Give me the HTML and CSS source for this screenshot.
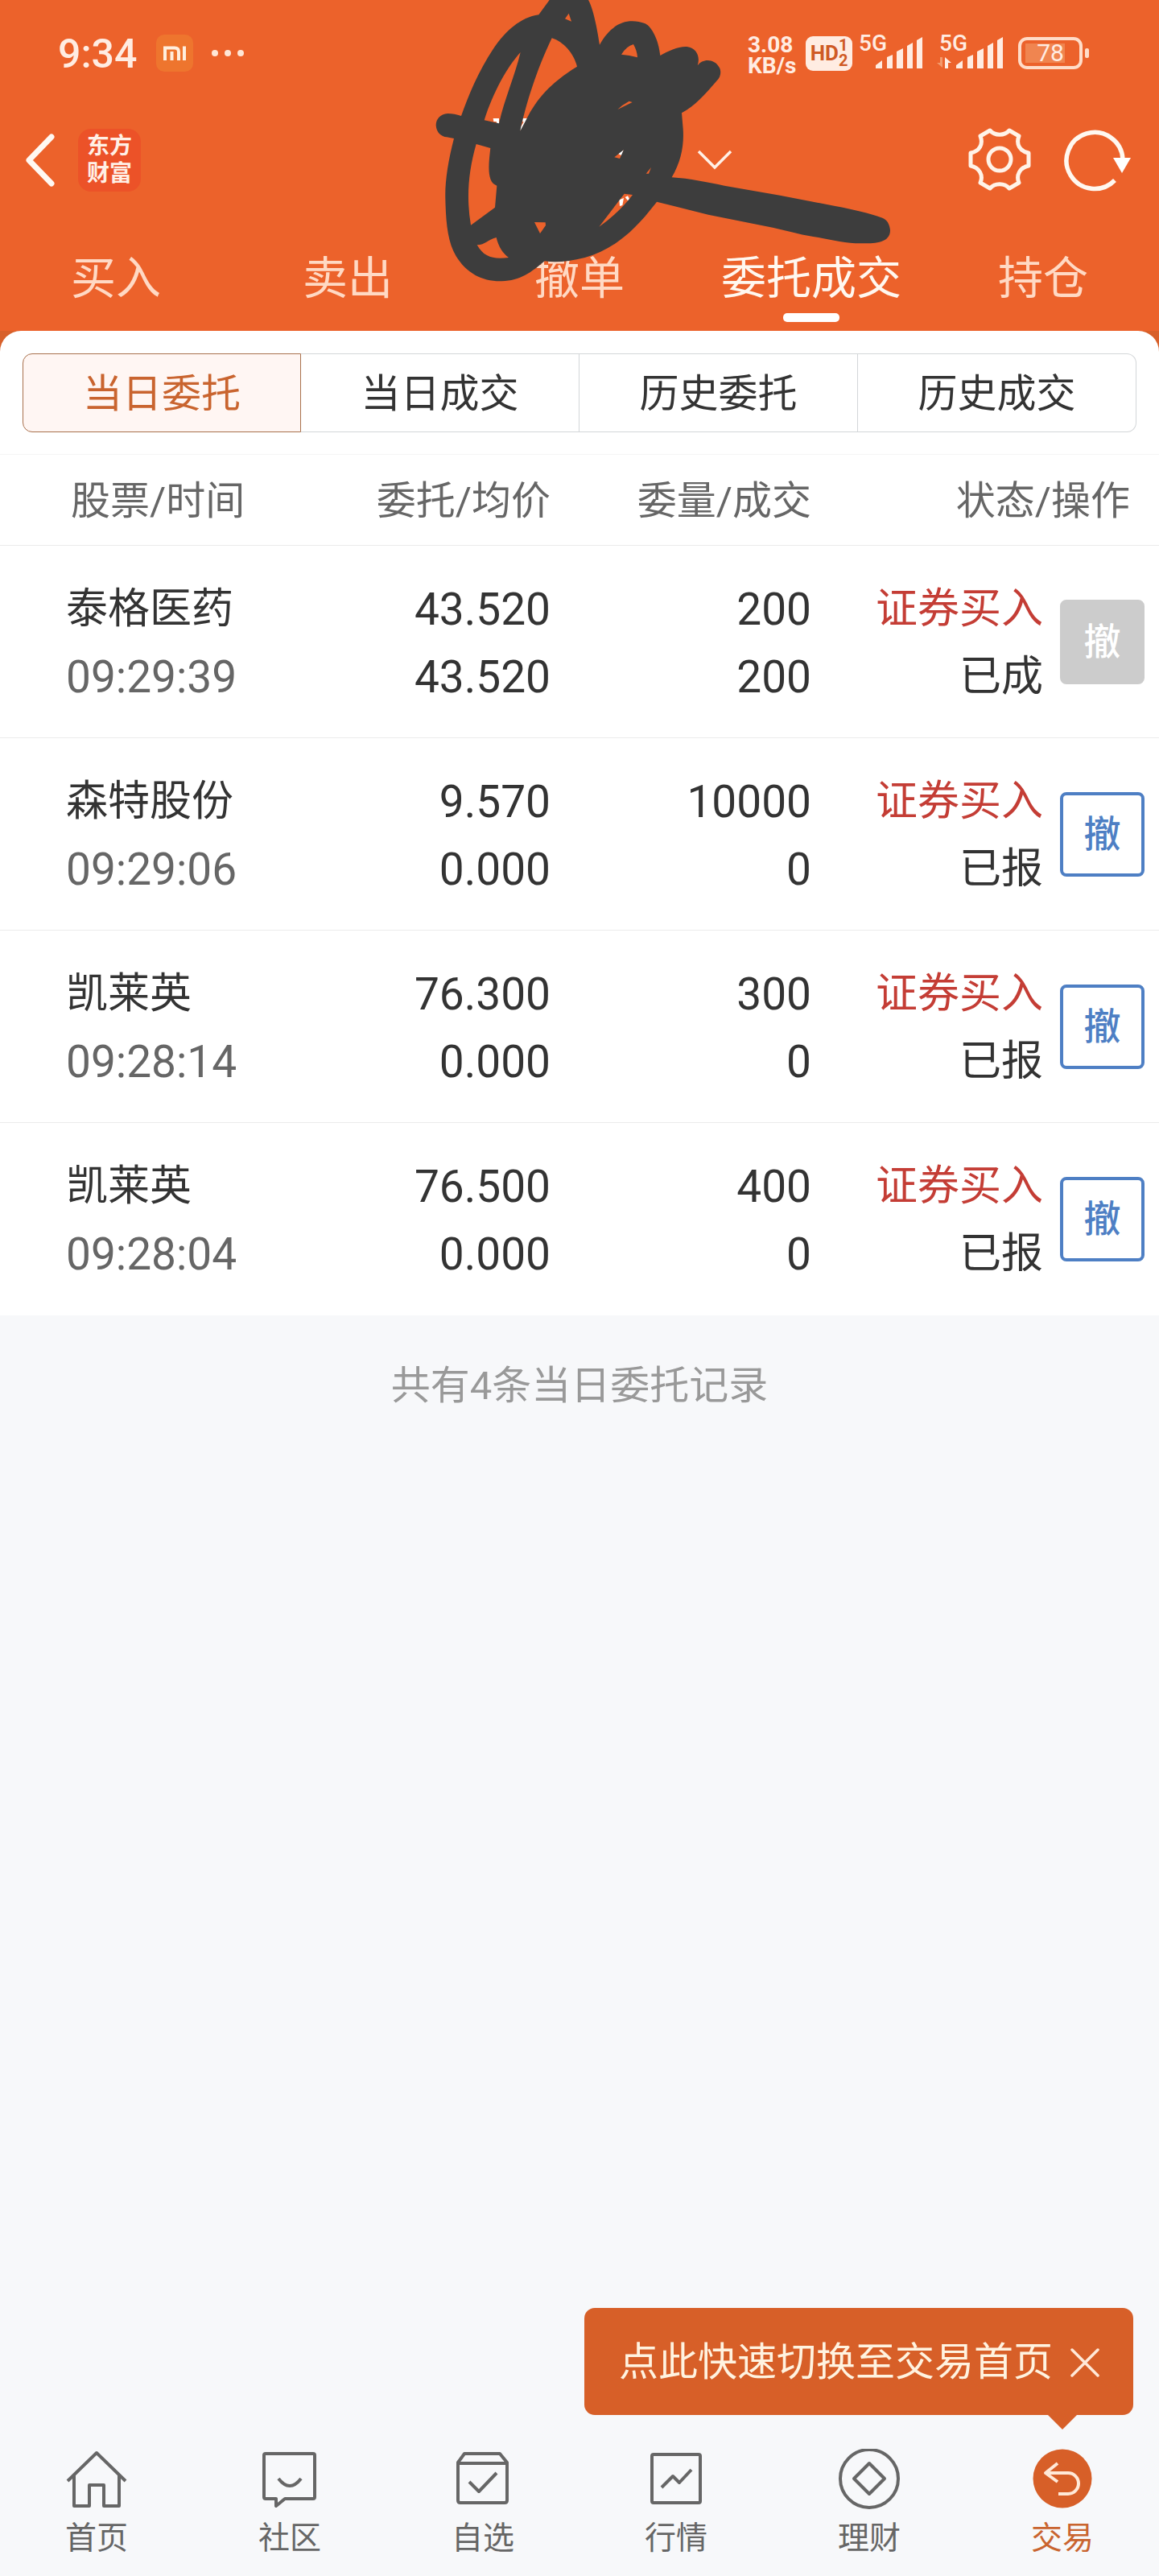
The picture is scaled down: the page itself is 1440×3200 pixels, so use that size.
FILE: index.html
```html
<!DOCTYPE html>
<html lang="zh-CN">
<head>
<meta charset="utf-8">
<meta name="viewport" content="width=device-width, initial-scale=1">
<title>委托成交</title>
<link rel="stylesheet" href="styles.css">
</head>
<body>
<div class="page">
  <header class="header">
    <div class="status-bar">
      <span class="clock">9:34</span>
      <svg class="mi-badge" width="46" height="46" viewBox="0 0 46 46" aria-hidden="true">
        <rect width="46" height="46" rx="10" fill="#ee752e"/>
        <path d="M11 32V16.500H23Q28 16.500 28 21.500V32M19.500 21V32" fill="none" stroke="#ffeedd" stroke-width="4"/>
        <path d="M35 14.500V32" stroke="#ffeedd" stroke-width="4"/>
      </svg>
      <svg class="more-dots" width="42" height="10" viewBox="0 0 42 10" fill="#ffe6d6" aria-hidden="true">
        <circle cx="5" cy="5" r="4"/><circle cx="21" cy="5" r="4"/><circle cx="37" cy="5" r="4"/>
      </svg>
      <div class="status-icons">
        <div class="net-speed"><span>3.08</span><span>KB/s</span></div>
        <div class="hd-badge"><span class="hd">HD</span><span class="sims"><span>1</span><span>2</span></span></div>
        <div class="signal">
          <span>5G</span>
          <svg width="60" height="40" viewBox="0 0 60 40" fill="#ffece2" aria-hidden="true">
            <path d="M1 39V35L9 29V39ZM15 39V25L22 22V39ZM27 39V18L35 14V39ZM40 39V11L47 7V39ZM52 39V4L59 0V39Z"/>
          </svg>
        </div>
        <div class="signal">
          <span>5G</span>
          <svg class="transfer" width="20" height="16" viewBox="0 0 20 16" aria-hidden="true">
            <path d="M8 1V14L1 8H5V1Z" fill="#f39a6c"/><path d="M11 15V1L19 8H15V15Z" fill="#ffece2"/>
          </svg>
          <svg width="60" height="40" viewBox="0 0 60 40" fill="#ffece2" aria-hidden="true">
            <path d="M1 39V35L9 29V39ZM15 39V25L22 22V39ZM27 39V18L35 14V39ZM40 39V11L47 7V39ZM52 39V4L59 0V39Z"/>
          </svg>
        </div>
        <div class="battery"><span>78</span></div>
      </div>
    </div>

    <div class="nav-bar">
      <button class="icon-button back" type="button" aria-label="返回">
        <svg width="40" height="68" viewBox="0 0 40 68" fill="none" stroke="#fff8f2" stroke-width="7" stroke-linecap="round" stroke-linejoin="round">
          <path d="M33 5L5 34L33 63"/>
        </svg>
      </button>
      <span class="logo">东方<br>财富</span>
      <button class="icon-button account" type="button" aria-label="切换账户">
        <svg width="44" height="26" viewBox="0 0 44 26" fill="none" stroke="#fff0e6" stroke-width="3.500">
          <path d="M2 2L22 22L42 2"/>
        </svg>
      </button>
      <button class="icon-button settings" type="button" aria-label="设置">
        <svg width="80" height="80" viewBox="0 0 80 80" fill="none" stroke="#fff3e8" stroke-width="5" stroke-linejoin="round">
          <circle cx="40" cy="39" r="14"/>
          <path d="M28 3C34 10 46 10 52 3L64 10C60 20 65 29 76 31V47C65 49 60 59 64 68L52 75C46 68 34 68 28 75L16 68C20 59 15 49 4 47V31C15 29 20 20 16 10Z"/>
        </svg>
      </button>
      <button class="icon-button refresh" type="button" aria-label="刷新">
        <svg width="84" height="80" viewBox="0 0 84 80">
          <path d="M73 39A35 35 0 1 0 63 65" fill="none" stroke="#fff8f0" stroke-width="5.500"/>
          <path d="M61 37H83L72 56Z" fill="#fff"/>
        </svg>
      </button>
    </div>

    <nav class="tabs">
      <a href="#">买入</a>
      <a href="#">卖出</a>
      <a href="#">撤单</a>
      <a href="#" class="active" aria-current="page">委托成交</a>
      <a href="#">持仓</a>
    </nav>

    <svg class="scribble" width="640" height="367" viewBox="0 0 1920 1101" aria-hidden="true">
      <path fill="#fff" d="M398 441H420V462L412 460L410 453H400ZM508 441H526L500 488L497 480L512 454H508ZM863 572L885 558L877 580ZM868 745L885 738L880 765L870 768ZM890 735L900 730L906 742L900 748Z"/>
      <path fill="#3d3d3d" fill-rule="evenodd" d="M608 0L568 55C500 65 445 115 400 180C340 270 305 360 279 432C262 427 245 423 229 423C200 425 185 445 185 467C187 495 205 508 225 511L252 516C230 600 218 680 220 740C222 830 228 900 260 955C300 1020 360 1050 430 1048C500 1046 540 1015 590 973C630 980 680 975 740 960C850 930 930 855 1008 752L1200 800L1440 848C1500 862 1560 878 1611 885C1660 895 1720 907 1766 907C1810 907 1878 910 1878 858C1876 835 1866 818 1849 812C1800 795 1740 780 1673 768L1467 728L1260 692C1200 680 1130 665 1064 661C1100 600 1110 540 1106 480L1101 421C1150 395 1190 350 1230 303C1250 285 1248 260 1240 250C1225 220 1180 215 1160 244C1170 215 1160 180 1120 174C1090 172 1050 190 1021 207C1015 150 990 100 965 88C900 65 840 85 795 167C785 100 770 30 753 0Z
        M680 50L690 80L666 70Z
        M617 142C660 155 700 200 711 248C610 310 560 370 524 441L499 488C520 390 560 260 617 142Z
        M500 195C480 280 440 370 420 460L365 448C400 340 450 250 500 195Z
        M335 537L388 552C380 620 375 680 412 692L405 773L315 839C298 740 305 640 335 537Z
        M338 913C370 912 375 895 410 885C418 920 435 945 456 960C400 967 365 960 338 913Z
        M552 828L593 829L594 840L573 870Z
        M876 203Q895 172 921 165Q935 190 936 214Q905 205 876 203Z
        M862 408Q880 390 905 377L917 381Z
        M850 586L885 558L870 591Z
        M968 647L987 624L978 647Z
        M887 722L918 726Q870 790 793 845Z"/>
    </svg>
  </header>

  <main class="main">
    <div class="sheet-wrap">
      <section class="sheet">
        <div class="segments">
          <button type="button" class="segment selected">当日委托</button>
          <button type="button" class="segment">当日成交</button>
          <button type="button" class="segment">历史委托</button>
          <button type="button" class="segment">历史成交</button>
        </div>
        <table class="orders">
          <colgroup><col class="c-name"><col class="c-price"><col class="c-qty"><col class="c-status"><col class="c-action"></colgroup>
          <thead>
            <tr><th>股票/时间</th><th>委托/均价</th><th>委量/成交</th><th colspan="2">状态/操作</th></tr>
          </thead>
          <tbody>
            <tr>
              <td><span>泰格医药</span><span class="num time">09:29:39</span></td>
              <td><span class="num">43.520</span><span class="num">43.520</span></td>
              <td><span class="num">200</span><span class="num">200</span></td>
              <td><span class="buy">证券买入</span><span>已成</span></td>
              <td class="action"><button type="button" class="cancel" disabled>撤</button></td>
            </tr>
            <tr>
              <td><span>森特股份</span><span class="num time">09:29:06</span></td>
              <td><span class="num">9.570</span><span class="num">0.000</span></td>
              <td><span class="num">10000</span><span class="num">0</span></td>
              <td><span class="buy">证券买入</span><span>已报</span></td>
              <td class="action"><button type="button" class="cancel">撤</button></td>
            </tr>
            <tr>
              <td><span>凯莱英</span><span class="num time">09:28:14</span></td>
              <td><span class="num">76.300</span><span class="num">0.000</span></td>
              <td><span class="num">300</span><span class="num">0</span></td>
              <td><span class="buy">证券买入</span><span>已报</span></td>
              <td class="action"><button type="button" class="cancel">撤</button></td>
            </tr>
            <tr>
              <td><span>凯莱英</span><span class="num time">09:28:04</span></td>
              <td><span class="num">76.500</span><span class="num">0.000</span></td>
              <td><span class="num">400</span><span class="num">0</span></td>
              <td><span class="buy">证券买入</span><span>已报</span></td>
              <td class="action"><button type="button" class="cancel">撤</button></td>
            </tr>
          </tbody>
        </table>
      </section>
    </div>
    <p class="summary">共有4条当日委托记录</p>
  </main>

  <footer class="bottom-bar">
    <div class="tip" role="status">
      <span>点此快速切换至交易首页</span>
      <button class="icon-button" type="button" aria-label="关闭">
        <svg width="36" height="36" viewBox="0 0 36 36" stroke="#ffe9d8" stroke-width="3.500" stroke-linecap="round"><path d="M2 2L34 34M34 2L2 34"/></svg>
      </button>
    </div>
    <nav class="bottom-nav">
      <a href="#">
        <svg width="76" height="76" viewBox="0 0 76 76"><path d="M2 40L38 5L74 40M10 33V71H29V45H47V71H66V33"/></svg>
        <span>首页</span>
      </a>
      <a href="#">
        <svg width="76" height="76" viewBox="0 0 76 76"><path d="M8 6H67Q69 6 69 8V60Q69 62 67 62H32L21 71V62H8Q6 62 6 60V8Q6 6 8 6Z"/><path d="M24 37Q38 55 52 37" stroke-width="4"/></svg>
        <span>社区</span>
      </a>
      <a href="#">
        <svg width="76" height="76" viewBox="0 0 76 76"><path d="M15 6H59L68 17V64Q68 67 65 67H10Q7 67 7 64V17ZM7 18H68M21 41L33 53L55 30"/></svg>
        <span>自选</span>
      </a>
      <a href="#">
        <svg width="76" height="76" viewBox="0 0 76 76"><rect x="8" y="7" width="60" height="60" rx="2"/><path d="M20 48L34 34L42 42L57 26"/></svg>
        <span>行情</span>
      </a>
      <a href="#">
        <svg width="76" height="76" viewBox="0 0 76 76"><circle cx="38" cy="37" r="36"/><path d="M38 18L57 37L38 56L19 37Z"/></svg>
        <span>理财</span>
      </a>
      <a href="#" class="active" aria-current="page">
        <svg width="76" height="76" viewBox="0 0 76 76"><circle cx="38" cy="37" r="36.500" fill="#d75f28" stroke="none"/><path d="M32 18L17 30L32 41M17 30H45A13 13 0 0 1 45 56H33" stroke="#ffe9d8"/></svg>
        <span>交易</span>
      </a>
    </nav>
  </footer>
</div>
</body>
</html>
```
FILE: styles.css
```css
* { box-sizing: border-box; }

body {
  margin: 0;
  background: #f7f8fa;
  color: #333;
  font-family: Roboto, "Noto Sans CJK SC", sans-serif;
}

button {
  margin: 0;
  padding: 0;
  border: 0;
  background: none;
  color: inherit;
  font: inherit;
}

a { color: inherit; text-decoration: none; }
svg { display: block; }

.page {
  display: flex;
  flex-direction: column;
  min-height: 100vh;
}

/* Header */
.header {
  position: relative;
  background: #ec622b;
  color: #ffece2;
}

.status-bar {
  display: flex;
  align-items: center;
  height: 132px;
  padding: 0 95px 0 72px;
}

.clock {
  width: 122px;
  padding-top: 2px;
  font-size: 50px;
  line-height: 60px;
  font-weight: 500;
}

.more-dots { margin-left: 22px; }

.status-icons {
  display: flex;
  align-items: center;
  margin-left: auto;
}

.net-speed {
  display: flex;
  flex-direction: column;
  width: 72px;
  padding-top: 6px;
  font-size: 28px;
  line-height: 26px;
  font-weight: 700;
}

.hd-badge {
  display: flex;
  align-items: center;
  justify-content: center;
  width: 58px;
  height: 43px;
  border-radius: 9px;
  background: #ffece2;
  color: #cf5a25;
  font-weight: 700;
}

.hd { font-size: 26px; line-height: 28px; }

.sims {
  display: flex;
  flex-direction: column;
  font-size: 20px;
  line-height: 19px;
}

.signal {
  position: relative;
  width: 80px;
  margin-left: 8px;
  padding-left: 20px;
  font-weight: 500;
}

.signal + .signal { margin-left: 20px; }

.signal span {
  position: absolute;
  top: -6px;
  left: 0;
  font-size: 28px;
  line-height: 28px;
}

.transfer {
  position: absolute;
  left: -4px;
  bottom: 0;
}

.battery {
  position: relative;
  display: flex;
  align-items: center;
  justify-content: center;
  width: 80px;
  height: 40px;
  margin-left: 18px;
  border: 4px solid #ffdcc8;
  border-radius: 11px;
  background: linear-gradient(90deg, #f08550 74%, transparent 74%) 5px 4px / 66px 24px no-repeat;
  font-size: 30px;
  line-height: 32px;
}

.battery::after {
  content: "";
  position: absolute;
  right: -12px;
  width: 5px;
  height: 12px;
  border-radius: 2px;
  background: #ffdcc8;
}

.nav-bar {
  display: flex;
  align-items: center;
  height: 134px;
  padding: 0 34px 0 31px;
}

.logo {
  width: 78px;
  height: 78px;
  margin-left: 26px;
  padding-top: 5px;
  border-radius: 16px;
  background: #ec5228;
  color: #fff0e6;
  font-size: 28px;
  line-height: 34px;
  font-weight: 700;
  text-align: center;
}

.account { margin-left: auto; }
.settings { margin-left: 292px; }
.refresh { margin-left: 40px; }

.tabs {
  display: grid;
  grid-template-columns: repeat(5, 1fr);
  height: 145px;
  color: #ffd9c4;
  font-size: 56px;
  line-height: 64px;
  text-align: center;
}

.tabs a {
  display: flex;
  flex-direction: column;
  align-items: center;
  padding-top: 48px;
}

.tabs .active { color: #fff8f0; }

.tabs .active::after {
  content: "";
  width: 70px;
  height: 11px;
  margin-top: 11px;
  border-radius: 5px;
  background: #fff;
}

.scribble {
  position: absolute;
  top: 0;
  left: 33.33%;
  pointer-events: none;
}

/* Order sheet */
.main { flex: 1; }
.sheet-wrap { background: linear-gradient(#d8602a 40px, transparent 40px); }

.sheet {
  padding-top: 28px;
  border-radius: 26px 26px 0 0;
  background: #fff;
}

.segments {
  display: grid;
  grid-template-columns: repeat(4, 1fr);
  margin: 0 28px 27px;
}

.segment {
  height: 98px;
  padding-top: 3px;
  border: 1px solid #d3d6d8;
  border-left-width: 0;
  font-size: 49px;
  line-height: 64px;
}

.segment:last-child { border-radius: 0 12px 12px 0; }

.segment.selected {
  border: 1px solid #a8704c;
  border-radius: 12px 0 0 12px;
  background: #fff6f3;
  color: #c9642f;
}

.orders {
  width: 100%;
  border-collapse: collapse;
  table-layout: fixed;
  text-align: right;
}

.c-name { width: 24%; }
.c-price { width: 23.5%; }
.c-qty { width: 22.5%; }
.c-status { width: 20%; }
.c-action { width: 10%; }

.orders th {
  height: 113px;
  padding: 4px 0 0;
  border-top: 1px solid #f5f5f5;
  color: #666;
  font-size: 49px;
  line-height: 64px;
  font-weight: 400;
}

.orders th:first-child { padding-left: 88px; text-align: left; }
.orders th:last-child { padding-right: 36px; }

.orders td {
  height: 239px;
  padding: 4px 0 0;
  border-top: 1px solid #ebebeb;
  font-size: 52px;
  line-height: 84px;
}

.orders td:first-child { padding-left: 82px; text-align: left; }
.orders td.action { padding: 0; }
.orders td span { display: block; }
.orders .num { font-size: 55px; }
.orders .time { color: #666; }
.orders .buy { color: #c43d35; }

.cancel {
  display: block;
  width: 105px;
  height: 105px;
  margin-left: auto;
  margin-right: 18px;
  border: 4px solid #4e7fc4;
  border-radius: 8px;
  color: #4e7fc4;
  font-size: 46px;
  line-height: 64px;
  font-weight: 500;
}

.cancel:disabled {
  border-color: #ccc;
  background: #ccc;
  color: #fff;
}

.summary {
  margin: 0;
  padding: 56px 0;
  color: #999;
  font-size: 49px;
  line-height: 64px;
  text-align: center;
}

/* Bottom bar */
.bottom-bar { position: relative; }

.bottom-nav {
  display: grid;
  grid-template-columns: repeat(6, 1fr);
  padding: 12px 0 23px;
  color: #666;
  font-size: 39px;
  line-height: 48px;
}

.bottom-nav a {
  display: flex;
  flex-direction: column;
  align-items: center;
  gap: 11px;
}

.bottom-nav svg {
  fill: none;
  stroke: #666;
  stroke-width: 4;
  stroke-linejoin: round;
}

.bottom-nav .active { color: #c9642f; }

.tip {
  position: absolute;
  right: 32px;
  bottom: calc(100% + 30px);
  display: flex;
  align-items: center;
  gap: 22px;
  height: 133px;
  padding: 2px 42px 0 43px;
  border-radius: 13px;
  background: #d75f28;
  color: #fff3e0;
  font-size: 49px;
  line-height: 64px;
}

.tip::after {
  content: "";
  position: absolute;
  top: 100%;
  right: 70px;
  border: 18px solid transparent;
  border-top-color: #d75f28;
  border-bottom: 0;
}
```
